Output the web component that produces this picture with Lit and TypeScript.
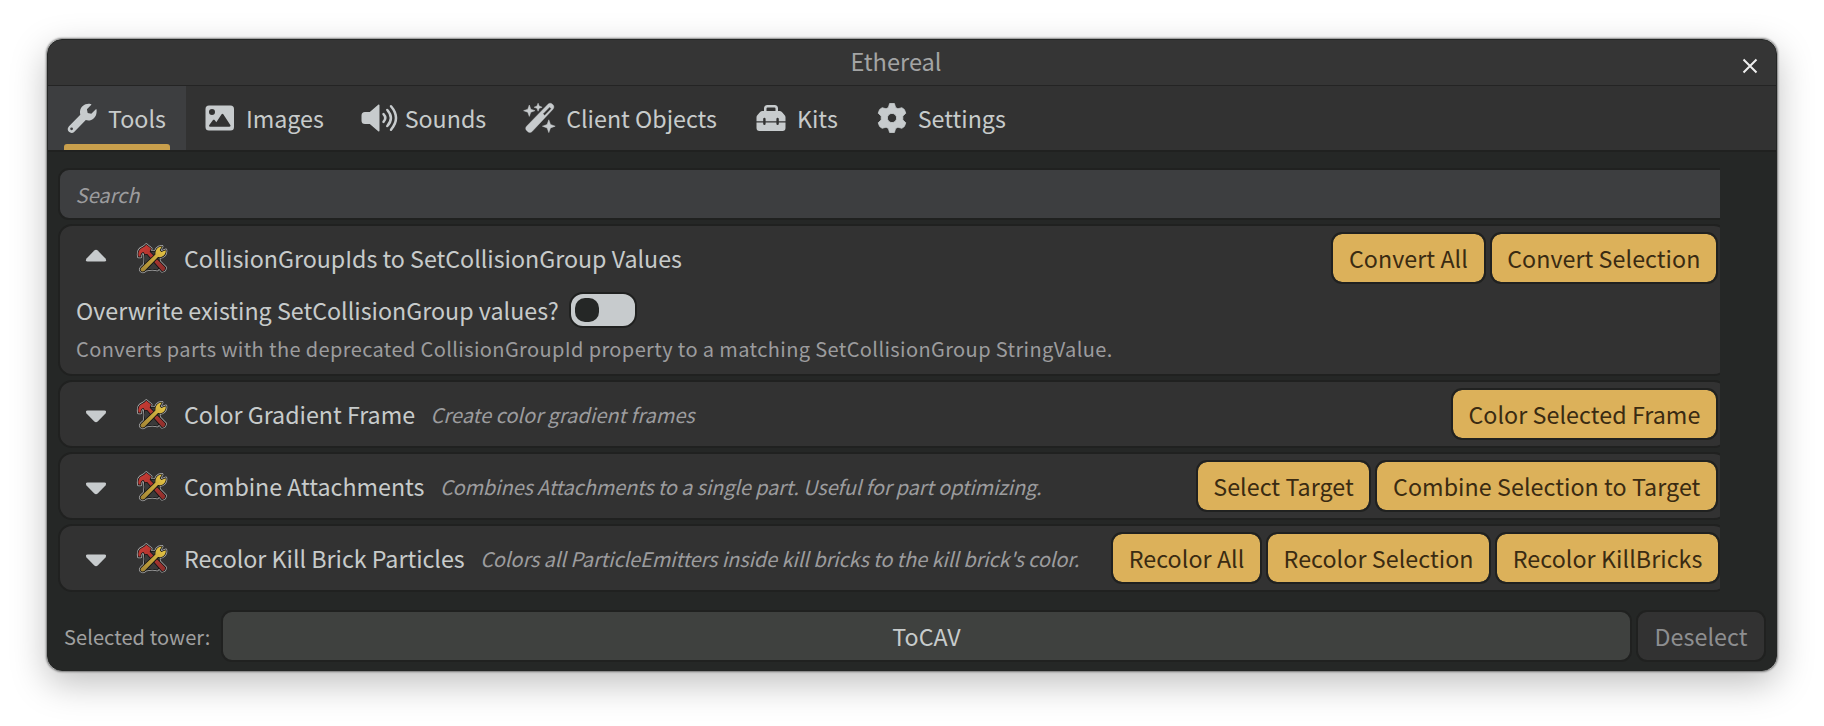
import { LitElement, html, css, svg } from "lit";
import { customElement, property } from "lit/decorators.js";

const ICONS: Record<string, unknown> = {
  tools: svg`<path fill-rule="evenodd" d="M29.600 7.200c.3-.8-.5-1.200-1-.7l-4.300 4.200-3.600-.8-.8-3.600 4.200-4.200c.6-.6.2-1.200-.6-1.200C18.600-.1 13.300 3 13 8.800c-.1 1 .1 2 .3 2.900L2 23.200c-1.700 1.700-1.700 4.100-.1 5.600 1.600 1.500 4 1.400 5.500-.1l11.400-11.600c5 1.500 10.400-1.700 10.800-8.200zM4.600 27.200a1.400 1.400 0 1 1 0-2.800 1.400 1.400 0 0 1 0 2.800z"/>`,
  images: svg`<path fill-rule="evenodd" d="M4 2.500h21.500a3.500 3.500 0 0 1 3.500 3.500v18a3.500 3.500 0 0 1-3.500 3.500H4A3.500 3.500 0 0 1 .5 24V6A3.500 3.500 0 0 1 4 2.500zM7 6a3 3 0 1 0 0 6 3 3 0 0 0 0-6zM18.300 11.300c-.5-.8-1.200-.8-1.700 0l-5.300 8-1.700-2.200c-.5-.6-1.100-.6-1.600 0l-3.700 5c-.6.900-.2 1.700.8 1.700h19.300c1 0 1.400-.9.900-1.700z"/>`,
  sounds: svg`<g transform="translate(-2 0)"><path d="M18.500 2.300v25.400c0 .7-.7 1-1.300.5L8.800 21H4a3.500 3.500 0 0 1-3.500-3.500v-5A3.500 3.500 0 0 1 4 9h4.800l8.400-7.200c.6-.5 1.300-.2 1.300.5z"/><g fill="none" stroke="currentColor" stroke-width="2.500" stroke-linecap="round"><path d="M22.500 11.200q3.600 3.800 0 7.600M26.300 7q7.200 8 0 16M30 3.300q10 11.700 0 23.400"/></g></g>`,
  wand: svg`<g transform="translate(-1.200 0)"><path fill-rule="evenodd" d="M24.200 1.200c1.300-1.300 3.200-1.200 4.400 0l.6.600c1.200 1.200 1.200 3.100 0 4.400L8.300 28.500c-1.300 1.300-3.200 1.300-4.500 0l-1-1c-1.200-1.200-1.200-3.100 0-4.300zM25.800 4l-6.600 6.800 1.700 1.700 6.600-6.800z" stroke="currentColor" stroke-width=".4"/><path d="M5.500 2l1.500 4.200 4.200 1.500-4.200 1.500-1.500 4.200L4 9.200-.2 7.700 4 6.200zM14.300.2l1.100 2.900 2.900 1.100-2.900 1.100-1.100 2.900-1.100-2.900-2.900-1.100 2.900-1.100zM25 16.800l1.700 4.700 4.700 1.700-4.700 1.700-1.700 4.700-1.700-4.700-4.700-1.700 4.700-1.700z" stroke="currentColor" stroke-width=".5" stroke-linejoin="round"/></g>`,
  kits: svg`<path d="M8 8V5.500A3.500 3.500 0 0 1 11.500 2h7A3.500 3.500 0 0 1 22 5.500V8h1.500c1 0 1.700.4 2.400 1l2.600 3c.6.700 1 1.300 1 2.300v3.900h-6.700v-2.300a1.200 1.200 0 0 0-2.400 0v2.300H9.600v-2.300a1.200 1.200 0 0 0-2.400 0v2.300H.5v-3.900c0-1 .3-1.600 1-2.300l2.600-3c.7-.6 1.400-1 2.400-1zm2.500 0h9V5.500a1 1 0 0 0-1-1h-7a1 1 0 0 0-1 1zM.5 19.500h6.700v1.300a1.200 1.200 0 0 0 2.400 0v-1.300h10.800v1.300a1.200 1.200 0 0 0 2.400 0v-1.300h6.700V25a3 3 0 0 1-3 3h-23a3 3 0 0 1-3-3z"/>`,
  settings: svg`<path fill-rule="evenodd" d="M12.600.5h4.800l1.200 4 2.300 1.300 4-1.100 2.500 1.900 1.400 3.600-3 2.900v3.800l3 2.900-1.400 3.600-2.500 1.900-4-1.100-2.300 1.300-1.200 4h-4.800l-1.200-4-2.300-1.300-4 1.100-2.500-1.900-1.400-3.600 3-2.900v-3.800l-3-2.900 1.400-3.600 2.500-1.900 4 1.100 2.300-1.300zM15 10.400a4.600 4.600 0 1 0 0 9.200 4.600 4.600 0 0 0 0-9.200z" stroke="currentColor" stroke-width=".8" stroke-linejoin="round"/>`,
};

const TABS = [
  { id: "tools", label: "Tools", w: 30 },
  { id: "images", label: "Images", w: 30 },
  { id: "sounds", label: "Sounds", w: 30.8 },
  { id: "wand", label: "Client Objects", w: 30 },
  { id: "kits", label: "Kits", w: 30 },
  { id: "settings", label: "Settings", w: 30 },
];

const PLATE = "M8 7.500q8 2 16 0q-1.500 9 0 17l-2.500 3q-5-1.500-11 0L8 24.500q1.500-8 0-17z";
const HAMMER = "M2 13.700Q.6 6.500 6 4.300Q8.600 3.400 10 1.300L14.900 5.300L13.600 8.600L30 25.300Q29.600 28.700 26.600 28.900L11 10.900L8.600 11.100L7 8.900Q3.600 9.600 4 13.700z";
const WRENCH = "M4.700 25.600L19.600 11.600C19.200 7 21.600 3.300 26.400 3.100L24.100 6.700L25.700 8.800L30.400 6.900C31 11.600 27.200 15 22.300 14.200L8 28.900C5.600 30.500 2.600 28 4.700 25.600z";

const hammerWrench = html`<svg class="tool" width="32" height="32" viewBox="-0.800 -0.600 33.600 33.600">
  <defs>
    <linearGradient id="y" x1="0" y1="1" x2="1" y2="0"><stop offset="0" stop-color="#a08235"/><stop offset="1" stop-color="#ecca45"/></linearGradient>
    <linearGradient id="r" x1="0" y1="0" x2="1" y2="1"><stop offset="0" stop-color="#cc3b34"/><stop offset="1" stop-color="#8c2f2c"/></linearGradient>
  </defs>
  <g stroke="#b4b4b4" stroke-width="3.200" stroke-linejoin="round">
    <path d=${PLATE}/><path d=${HAMMER}/><path d=${WRENCH}/>
  </g>
  <g stroke="#151515" stroke-width="1.700" stroke-linejoin="round" paint-order="stroke">
    <path d=${PLATE} fill="#3a3a3a"/>
    <path d=${HAMMER} fill="url(#r)"/>
    <path d=${WRENCH} fill="url(#y)"/>
  </g>
</svg>`;

@customElement("tab-item")
export class TabItem extends LitElement {
  @property() label = "";
  @property() icon = "";
  @property({ type: Number }) w = 30;
  @property({ type: Boolean, reflect: true }) active = false;
  static styles = css`
    :host { display: flex; flex-direction: column; justify-content: space-between; height: 64px; padding: 0 16px; box-sizing: border-box; }
    :host([active]) { background: #3d3e40; }
    .row { display: flex; align-items: center; height: 58px; padding: 6px 4px 0 3px; box-sizing: border-box; gap: 11px; }
    svg { color: #c7cbcd; fill: currentColor; flex: none; overflow: visible; }
    .bar { height: 6px; border-radius: 3px 3px 0 0; }
    :host([active]) .bar { background: #c99f4c; }
  `;
  render() {
    return html`<div class="row">
        <svg width=${this.w} height="30" viewBox="0 0 ${this.w} 30">${ICONS[this.icon]}</svg>
        <span>${this.label}</span>
      </div><div class="bar"></div>`;
  }
}

@customElement("tool-card")
export class ToolCard extends LitElement {
  @property() label = "";
  @property() hint = "";
  @property({ type: Number }) tracking = 0;
  @property({ type: Array }) actions: string[] = [];
  @property({ type: Boolean }) open = false;
  static styles = css`
    :host { display: block; background: #323232; border: 2px solid #202120; border-radius: 14px; }
    .head { display: flex; align-items: center; height: 64px; padding: 0 8px 0 24px; }
    .arrow { flex: none; width: 24px; height: 16px; fill: #c7cbcd; padding-top: 4px; }
    .arrow.up { padding: 0 0 4px; }
    .tool { flex: none; margin: 1px 0 0 28px; }
    .title { margin-left: 16px; white-space: nowrap; letter-spacing: -.02px; }
    .hint { margin-left: 15.500px; white-space: nowrap; font-size: var(--small); font-style: italic; color: #9c9c9e; }
    .actions { display: flex; gap: 4px; margin-left: auto; padding-left: 32px; }
    button { font: inherit; letter-spacing: .06px; height: 52px; padding: 0 15.600px; background: #dcb15a; color: #3a2b12; border: 2px solid #202120; border-radius: 11px; white-space: nowrap; background-clip: padding-box; }
    .option { display: flex; align-items: center; gap: 10px; height: 40px; padding-left: 16px; }
    .toggle { width: 64px; height: 32px; border: 2px solid #202120; border-radius: 14px; background: #c7cbcd; display: flex; align-items: center; }
    .knob { width: 24px; height: 24px; margin-left: 4px; border-radius: 10px; background: #252726; }
    .desc { height: 44px; padding: 0 16px; line-height: 38px; font-size: var(--small); letter-spacing: .38px; color: #9c9c9e; }
  `;
  render() {
    return html`<div class="head">
        <svg class="arrow ${this.open ? "up" : ""}" viewBox="0 0 24 16">${this.open
          ? svg`<path d="M10.300 2.600q1.700-1.600 3.400 0L21.500 10.500q1.500 3-1 3H3.500q-2.500 0-1-3z"/>`
          : svg`<path d="M10.300 13.400q1.700 1.600 3.400 0L21.500 5.500q1.500-3-1-3H3.500q-2.500 0-1 3z"/>`}</svg>
        ${hammerWrench}
        <span class="title">${this.label}</span>
        ${this.hint && !this.open ? html`<span class="hint" style="letter-spacing:${this.tracking}px">${this.hint}</span>` : ""}
        <div class="actions">${this.actions.map((a) => html`<button>${a}</button>`)}</div>
      </div>
      ${this.open
        ? html`<div class="option"><span>Overwrite existing SetCollisionGroup values?</span><div class="toggle"><div class="knob"></div></div></div>
            <div class="desc">${this.hint}</div>`
        : ""}`;
  }
}

const CARDS = [
  { label: "CollisionGroupIds to SetCollisionGroup Values", hint: "Converts parts with the deprecated CollisionGroupId property to a matching SetCollisionGroup StringValue.", tracking: 0, open: true, actions: ["Convert All", "Convert Selection"] },
  { label: "Color Gradient Frame", hint: "Create color gradient frames", tracking: 0.02, open: false, actions: ["Color Selected Frame"] },
  { label: "Combine Attachments", hint: "Combines Attachments to a single part. Useful for part optimizing.", tracking: -0.15, open: false, actions: ["Select Target", "Combine Selection to Target"] },
  { label: "Recolor Kill Brick Particles", hint: "Colors all ParticleEmitters inside kill bricks to the kill brick's color.", tracking: -0.115, open: false, actions: ["Recolor All", "Recolor Selection", "Recolor KillBricks"] },
];

@customElement("app-root")
export class AppRoot extends LitElement {
  static styles = css`
    :host { display: block; box-sizing: border-box; width: 1824px; height: 726px; padding: 39px 47px 0; background: #fff; overflow: hidden;
      --small: 20px; font: 23.250px "Noto Sans CJK JP", "Noto Sans CJK SC", sans-serif; color: #c7cbcb; }
    .window { height: 632px; box-sizing: border-box; border: 1px solid #242625; border-radius: 15px; background: #252726; overflow: hidden; display: flex; flex-direction: column; }
    .shadow { border-radius: 15px; box-shadow: 0 0 2px 1px rgba(0,0,0,.45), 0 12px 36px rgba(0,0,0,.26); }
    .titlebar { height: 45px; flex: none; border-bottom: 1px solid #242424; background: #353535; color: #a3a4a4; display: grid; grid-template-columns: 52px 1fr 52px; align-items: center; text-align: center; }
    .titlebar span { grid-column: 2; padding: 0 32px 3px 0; font-size: 23.600px; line-height: 40px; }
    .close { width: 16px; height: 16px; margin: 6px 0 0 18px; }
    .tabs { display: flex; height: 64px; flex: none; background: #323232; border-bottom: 2px solid #202120; }
    .list { display: flex; flex-direction: column; gap: 4px; width: 1672px; box-sizing: border-box; overflow: hidden; padding: 16px 0 0 10px; }
    .list > * { width: 1666px; box-sizing: content-box; flex: none; }
    .list > .search { height: 48px; line-height: 50px; border: 2px solid #202120; border-radius: 11px; background: #3d3e40; font-size: var(--small); font-style: italic; color: #9c9c9e; text-indent: 15.500px; width: 1690px; }
    .footer { display: flex; align-items: center; padding: 18px 10px 0 16px; }
    .footer .lbl { font-size: var(--small); letter-spacing: .08px; color: #a0a0a0; width: 157px; white-space: nowrap; }
    .field, .desel { height: 48px; border: 2px solid #202120; border-radius: 11px; display: flex; align-items: center; justify-content: center; }
    .field { flex: 1; background: #3f413f; margin-right: 4px; }
    .desel { width: 126px; background: #323232; color: #8d8e90; letter-spacing: .08px; }
  `;
  render() {
    return html`<div class="shadow"><div class="window">
      <div class="titlebar"><span>Ethereal</span>
        <svg class="close" viewBox="0 0 16 16"><path d="M1.500 1.500l13 13M14.500 1.500l-13 13" stroke="#eee" stroke-width="2"/></svg></div>
      <div class="tabs">${TABS.map((t, i) => html`<tab-item .label=${t.label} .icon=${t.id} .w=${t.w} ?active=${i === 0}></tab-item>`)}</div>
      <div class="list">
        <div class="search">Search</div>
        ${CARDS.map((c) => html`<tool-card .label=${c.label} .hint=${c.hint} .tracking=${c.tracking} .open=${c.open} .actions=${c.actions}></tool-card>`)}
      </div>
      <div class="footer"><span class="lbl">Selected tower:</span><div class="field">ToCAV</div><div class="desel">Deselect</div></div>
    </div></div>`;
  }
}
